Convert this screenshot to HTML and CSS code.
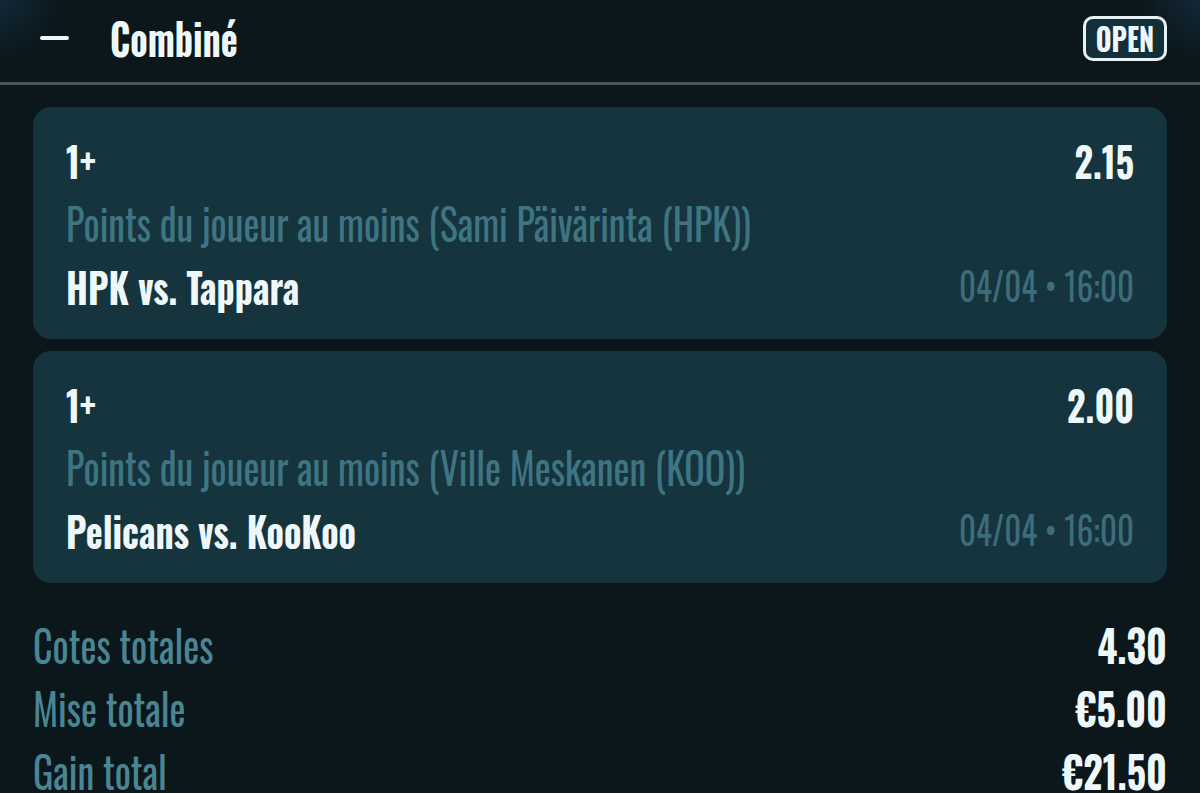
FILE: index.html
```html
<!DOCTYPE html>
<html lang="fr">
<head>
    <meta charset="UTF-8">
    <meta name="viewport" content="width=device-width, initial-scale=1.0">
    <title>Combiné</title>
    <link rel="stylesheet" href="styles.css">
</head>
<body>
    <header class="slip-header">
        <div class="slip-title">
            <span class="collapse-icon"></span>
            <h1>Combiné</h1>
        </div>
        <span class="status-badge"><span class="tall">OPEN</span></span>
    </header>

    <main class="slip-body">
        <div class="selection">
            <div class="sel-row">
                <span class="sel-pick tall">1+</span>
                <span class="sel-odds tall">2.15</span>
            </div>
            <div class="sel-row">
                <span class="sel-market tall">Points du joueur au moins (Sami Päivärinta (HPK))</span>
            </div>
            <div class="sel-row">
                <span class="sel-event tall">HPK vs. Tappara</span>
                <span class="sel-date tall">04/04 • 16:00</span>
            </div>
        </div>

        <div class="selection">
            <div class="sel-row">
                <span class="sel-pick tall">1+</span>
                <span class="sel-odds tall">2.00</span>
            </div>
            <div class="sel-row">
                <span class="sel-market tall">Points du joueur au moins (Ville Meskanen (KOO))</span>
            </div>
            <div class="sel-row">
                <span class="sel-event tall">Pelicans vs. KooKoo</span>
                <span class="sel-date tall">04/04 • 16:00</span>
            </div>
        </div>

        <div class="totals">
            <div class="total-row">
                <span class="total-label tall">Cotes totales</span>
                <span class="total-value tall">4.30</span>
            </div>
            <div class="total-row">
                <span class="total-label tall">Mise totale</span>
                <span class="total-value tall">€5.00</span>
            </div>
            <div class="total-row">
                <span class="total-label tall">Gain total</span>
                <span class="total-value tall">€21.50</span>
            </div>
        </div>
    </main>
</body>
</html>
```

FILE: styles.css
```css
* {
    margin: 0;
    padding: 0;
    box-sizing: border-box;
}

body {
    font-family: "Oswald", "Roboto Condensed", "Liberation Sans Narrow", "DejaVu Sans Condensed", "Liberation Sans", sans-serif;
    font-stretch: condensed;
    background-color: #0b171a;
    background-image:
        radial-gradient(circle at 0 0, rgba(30, 70, 110, 0.35), transparent 60px),
        radial-gradient(circle at 100% 0, rgba(30, 70, 110, 0.35), transparent 60px);
    background-repeat: no-repeat;
    color: #eef8fa;
    height: 793px;
    overflow: hidden;
}

/* the condensed face is a bit short, stretch glyphs up */
.tall {
    display: inline-block;
    transform: scaleY(1.17);
}

/* header */
.slip-header {
    height: 85px;
    display: flex;
    align-items: center;
    justify-content: space-between;
    padding: 0 33px 6px 40px;
    border-bottom: 3px solid #4b5759;
}

.slip-title {
    display: flex;
    align-items: center;
}

.collapse-icon {
    width: 29px;
    height: 4px;
    border-radius: 2px;
    background-color: #eef8fa;
    margin-right: 41px;
}

.slip-title h1 {
    font-size: 36px;
    font-weight: bold;
    line-height: 1;
    transform: scaleY(1.2);
}

.status-badge {
    height: 45px;
    width: 84px;
    display: flex;
    align-items: center;
    justify-content: center;
    border: 3px solid #e6f2f4;
    border-radius: 10px;
    background-color: #13303a;
    font-size: 27px;
    font-weight: bold;
}

/* selections */
.slip-body {
    padding: 22px 33px 0 33px;
}

.selection {
    background-color: #16343d;
    border-radius: 18px;
    padding: 21px 33px 22px 33px;
    margin-bottom: 12px;
}

.sel-row {
    display: flex;
    justify-content: space-between;
    align-items: center;
    height: 63px;
    line-height: 63px;
    white-space: nowrap;
}

.sel-pick,
.sel-odds,
.sel-event {
    font-size: 36px;
    font-weight: bold;
}

.sel-market {
    font-size: 38px;
    color: #3f7483;
}

.sel-date {
    font-size: 33px;
    color: #3c6d7a;
}

/* totals */
.totals {
    margin-top: 30px;
}

.total-row {
    display: flex;
    justify-content: space-between;
    align-items: center;
    height: 63px;
    line-height: 63px;
}

.total-label {
    font-size: 38px;
    color: #4a8593;
}

.total-value {
    font-size: 38px;
    font-weight: bold;
}
```
